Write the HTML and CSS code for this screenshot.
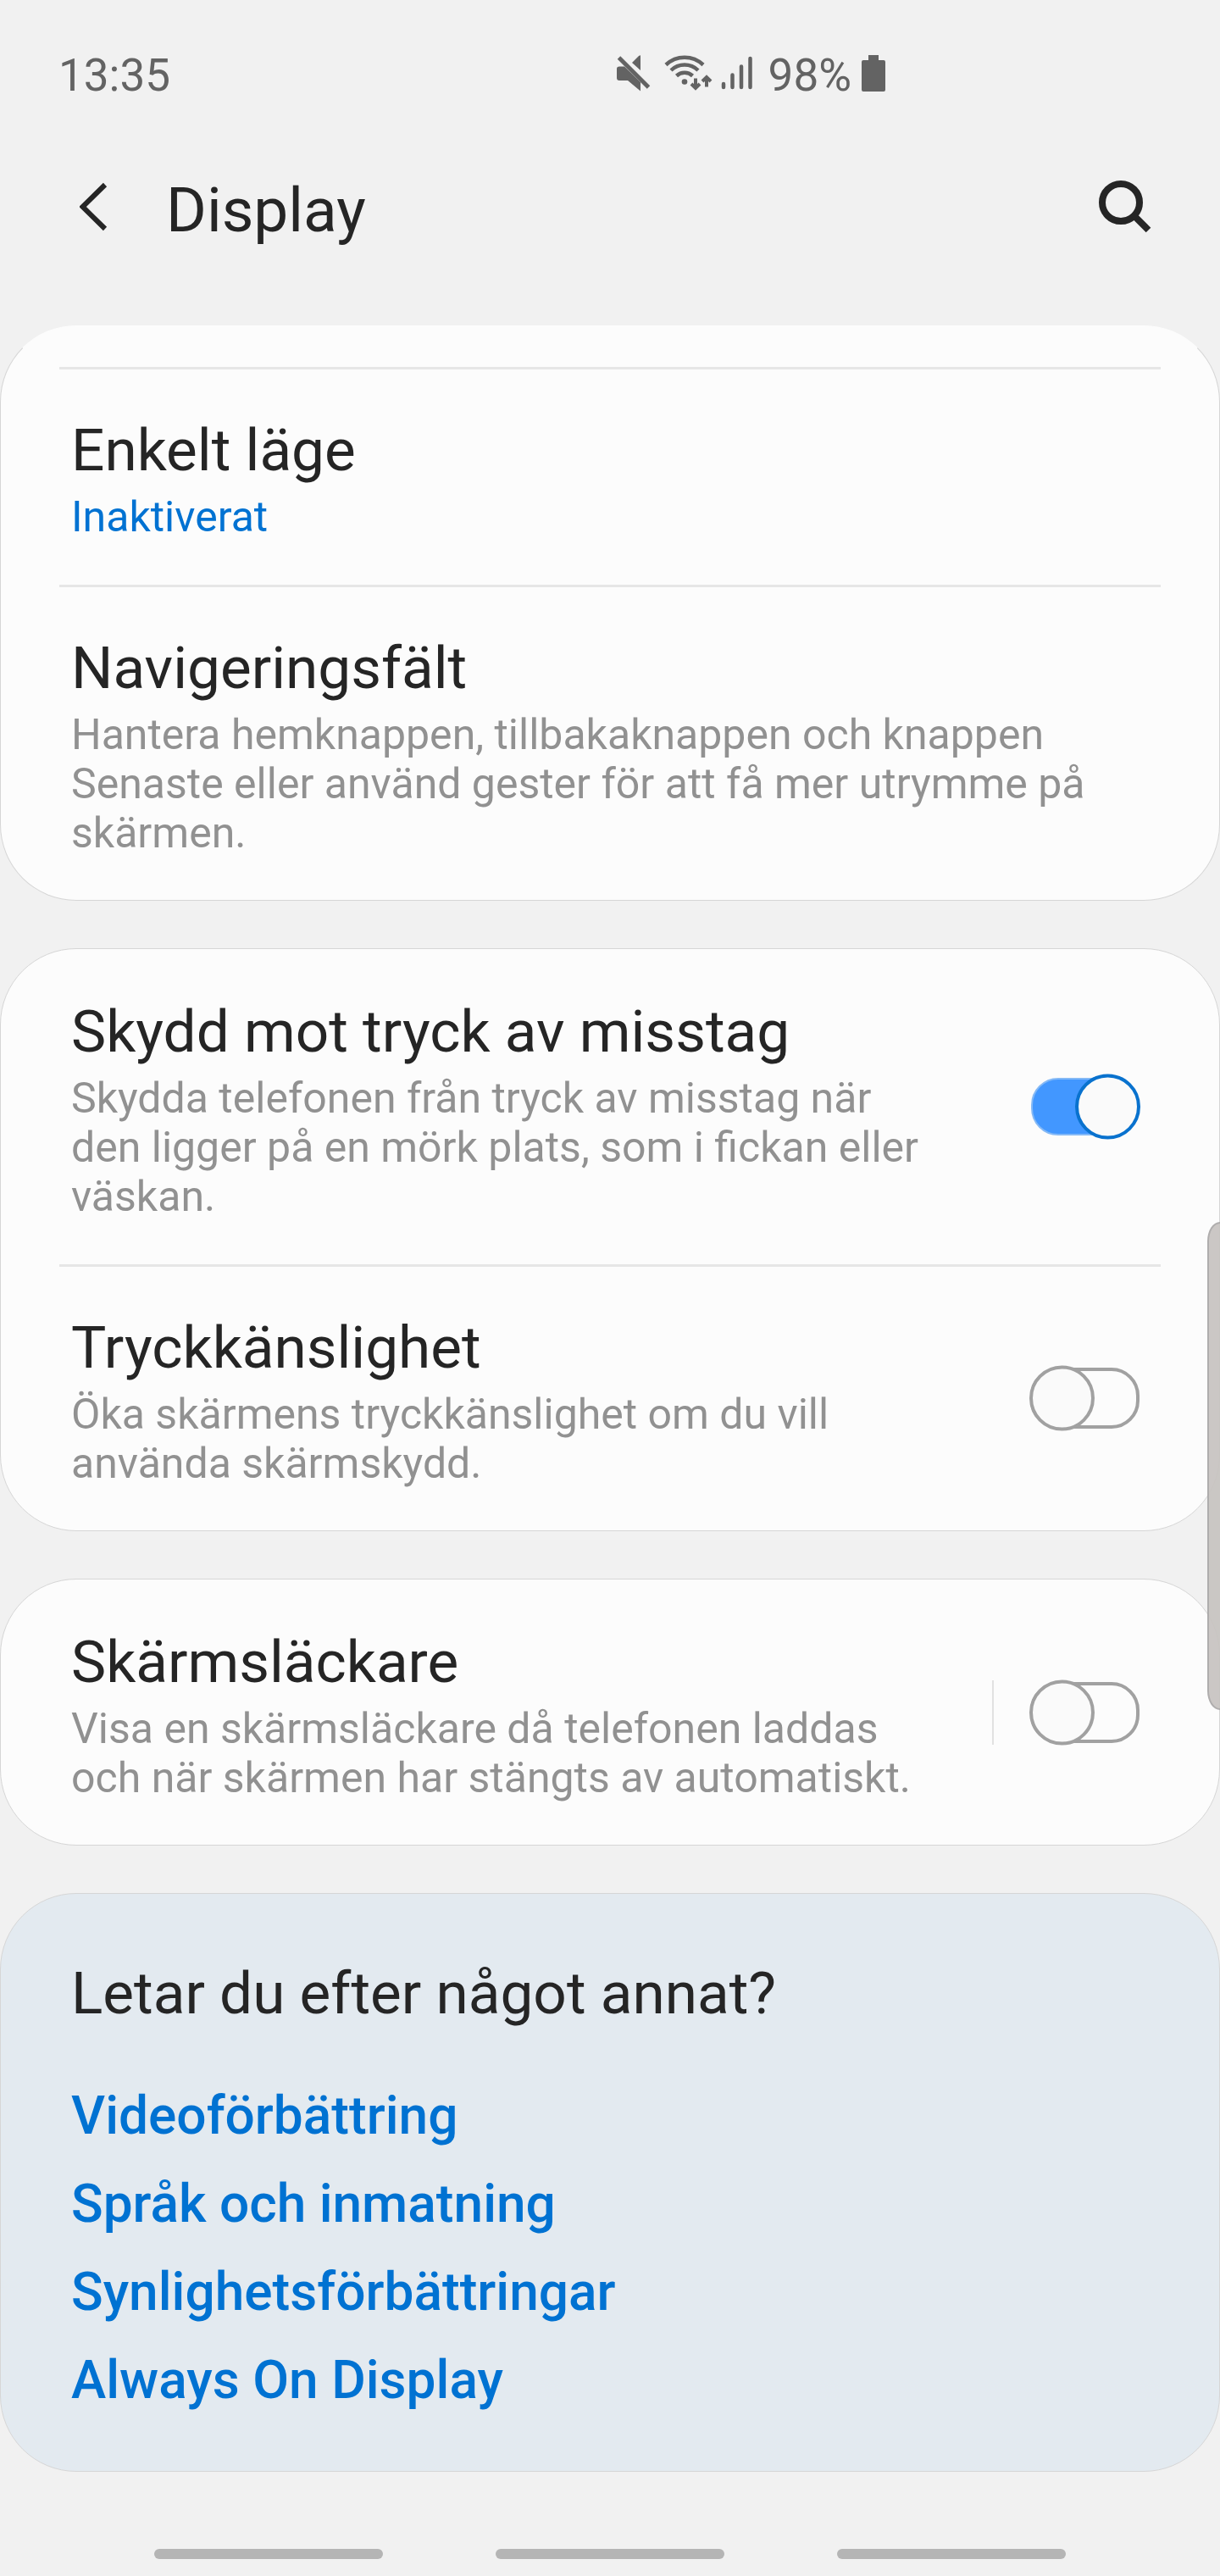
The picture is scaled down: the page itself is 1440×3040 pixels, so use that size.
FILE: index.html
```html
<!DOCTYPE html>
<html lang="sv">
<head>
<meta charset="utf-8">
<title>Display</title>
<link rel="stylesheet" href="styles.css">
</head>
<body>
<div class="screen">
  <header class="status">
    <span class="clock">13:35</span>
    <div class="indicators">
      <svg class="mute" width="40" height="44" viewBox="0 0 40 44">
        <path d="M3 13.500h6L28 32v10.500L13 30H3q-3 0-3-3V16q0-2.500 3-2.500ZM28 .500V18L18 9 26 1q2-1 2-.500Z"/>
        <path class="slash" d="M2.500 3 37.500 38"/>
      </svg>
      <svg class="wifi" width="58" height="44" viewBox="0 0 58 44">
        <path class="arc" d="M2 11.500a32 32 0 0 1 44 0M8 18a23 23 0 0 1 32 0M14.500 24.500a14 14 0 0 1 19 0"/>
        <circle cx="24" cy="31.500" r="3.300"/>
        <path class="arrow" d="M37 27.500v11M32 34l5 5 5-5M50 37.500v-11M45 31l5-5 5 5"/>
      </svg>
      <svg class="signal" width="38" height="40" viewBox="0 0 38 40">
        <path d="M3 33v4M13.500 22.500V37M24 12.500V37M34.500 3v34"/>
      </svg>
      <span class="percent">98%</span>
      <svg class="battery" width="28" height="43" viewBox="0 0 28 43">
        <path d="M8 0h12v6h6a2 2 0 0 1 2 2v33a2 2 0 0 1-2 2H2a2 2 0 0 1-2-2V8a2 2 0 0 1 2-2h6Z"/>
      </svg>
    </div>
  </header>
  <div class="toolbar">
    <svg class="back" width="36" height="58" viewBox="0 0 36 58"><path d="M30 3 3.500 29 30 55"/></svg>
    <h1>Display</h1>
    <svg class="search" width="64" height="64" viewBox="0 0 64 64"><circle cx="27" cy="27" r="22"/><path d="m42.500 42.500 17 17"/></svg>
  </div>
  <main>
    <section class="card card-first">
      <div class="row">
        <div class="text"><h2>Enkelt läge</h2><p class="state">Inaktiverat</p></div>
      </div>
      <div class="row">
        <div class="text"><h2>Navigeringsfält</h2><p>Hantera hemknappen, tillbakaknappen och knappen<br>Senaste eller använd gester för att få mer utrymme på<br>skärmen.</p></div>
      </div>
    </section>
    <section class="card">
      <div class="row">
        <div class="text"><h2>Skydd mot tryck av misstag</h2><p>Skydda telefonen från tryck av misstag när<br>den ligger på en mörk plats, som i fickan eller<br>väskan.</p></div>
        <svg class="switch on" width="132" height="80" viewBox="0 0 132 80"><rect x="3" y="7" width="124" height="66" rx="31"/><circle cx="92.500" cy="40" r="36.500"/></svg>
      </div>
      <div class="row">
        <div class="text"><h2>Tryckkänslighet</h2><p>Öka skärmens tryckkänslighet om du vill<br>använda skärmskydd.</p></div>
        <svg class="switch" width="132" height="80" viewBox="0 0 132 80"><rect x="3" y="6" width="125" height="68" rx="31"/><circle cx="38.500" cy="40" r="36.500"/></svg>
      </div>
    </section>
    <section class="card card-single">
      <div class="row">
        <div class="text"><h2>Skärmsläckare</h2><p>Visa en skärmsläckare då telefonen laddas<br>och när skärmen har stängts av automatiskt.</p></div>
        <span class="separator"></span>
        <svg class="switch" width="132" height="80" viewBox="0 0 132 80"><rect x="3" y="6" width="125" height="68" rx="31"/><circle cx="38.500" cy="40" r="36.500"/></svg>
      </div>
    </section>
    <section class="card related">
      <h2>Letar du efter något annat?</h2>
      <a>Videoförbättring</a>
      <a>Språk och inmatning</a>
      <a>Synlighetsförbättringar</a>
      <a>Always On Display</a>
    </section>
  </main>
  <nav><span></span><span></span><span></span></nav>
  <div class="edge-handle"></div>
</div>
</body>
</html>
```
FILE: styles.css
```css
* { box-sizing: border-box; }
body { margin: 0; background: #f1f1f1; font-family: Roboto, sans-serif; color: #252525; }
h1, h2, p { margin: 0; font-weight: 400; white-space: nowrap; }
svg { display: block; flex: none; }
.screen { position: relative; width: 1440px; height: 3040px; overflow: hidden; display: flex; flex-direction: column; }
.status { height: 180px; padding: 58px 395px 0 69px; display: flex; justify-content: space-between; color: #636363; font-size: 53px; line-height: 62px; }
.indicators { display: flex; fill: #636363; }
.mute { margin: 7px 16px 0 0; }
.slash { stroke: #636363; stroke-width: 5; }
.wifi { margin: 7px 9px 0 0; }
.arc, .arrow { fill: none; stroke: #636363; stroke-width: 4.5; }
.arrow { stroke-width: 4; }
.signal { margin: 8px 18px 0 0; fill: none; stroke: #636363; stroke-width: 4.5; stroke-linecap: round; }
.percent { margin-right: 12px; }
.battery { margin-top: 7px; }
.toolbar { height: 204px; padding: 0 80px 0 94px; display: flex; }
.toolbar h1 { margin: 25px auto 0 66px; font-size: 73px; line-height: 86px; }
.back { margin-top: 35px; fill: none; stroke: #252525; stroke-width: 6; }
.search { margin-top: 32px; fill: none; stroke: #252525; stroke-width: 8; }
main { display: flex; flex-direction: column; gap: 56px; }
.card { background: #fcfcfc; border: 1px solid #d6d6d6; border-radius: 90px; height: 688px; }
.card-first { height: 679px; border-top-color: #fcfcfc; padding-top: 48px; }
.card-single { height: 315px; }
.row { position: relative; display: flex; justify-content: space-between; align-items: center; padding: 57px 92px 51px 83px; }
.row + .row, .card-first .row { padding-top: 58px; }
.row + .row::before, .card-first .row::before { content: ""; position: absolute; left: 69px; right: 69px; top: 0; height: 3px; background: #e6e6e6; }
.row h2 { font-size: 69.3px; line-height: 82px; }
.row p { margin-top: 8px; font-size: 50px; line-height: 58px; color: #919191; }
.row .state { color: #0072d2; }
.switch { margin-bottom: 7px; fill: none; stroke: #a1a1a1; stroke-width: 4; }
.switch circle { fill: #fafafa; }
.switch.on rect { fill: #4297ff; stroke: #84b9f6; stroke-width: 2; }
.switch.on circle { stroke: #0972ce; }
.separator { width: 2px; height: 76px; background: #e1e1e1; margin: 0 42px 7px auto; }
.related { height: 683px; padding: 77px 83px 0; background: #e3eaf0; display: flex; flex-direction: column; }
.related h2 { font-size: 69.3px; line-height: 82px; margin-bottom: 51px; }
.related a { font-size: 62.2px; line-height: 72px; height: 104px; padding-top: 16px; font-weight: 500; color: #0072d2; }
nav { display: flex; justify-content: space-between; padding: 0 182px; margin-top: 91px; }
nav span { width: 270px; height: 12px; border-radius: 6px; background: #b5b5b5; }
.edge-handle { position: absolute; left: 1425px; top: 1442px; width: 30px; height: 576px; border: 2px solid #aaa8a8; border-radius: 16px / 24px; background: #c8c4c1; opacity: .93; }
```
